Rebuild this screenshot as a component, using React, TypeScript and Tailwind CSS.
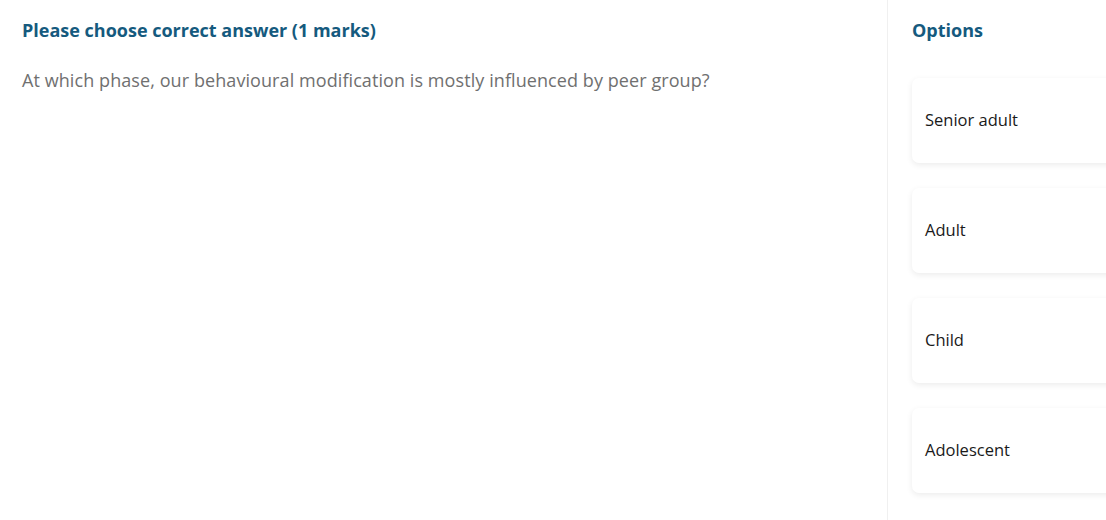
import React from "react";

export default function App() {
  const options = ["Senior adult", "Adult", "Child", "Adolescent"];
  return (
    <div
      className="flex w-[1106px] h-[520px] overflow-hidden bg-white"
      style={{ fontFamily: '"Open Sans", "Noto Sans", sans-serif' }}
    >
      <div className="w-[888px] shrink-0 border-r border-[#f0f0f0] px-[22px] pt-[17px]">
        <h2 className="text-[18px] leading-[26px] font-bold text-[#155a7e]">
          Please choose correct answer (1 marks)
        </h2>
        <p className="mt-[24px] text-[18px] leading-[26px] text-[#707070] tracking-[0.08px]">
          At which phase, our behavioural modification is mostly influenced by peer group?
        </p>
      </div>
      <div className="w-[320px] shrink-0 pl-[24px] pt-[17px]">
        <h3 className="text-[18px] leading-[26px] font-bold text-[#155a7e]">Options</h3>
        <div className="mt-[35px] flex flex-col gap-[25px]">
          {options.map((o) => (
            <div
              key={o}
              className="h-[85px] w-[260px] rounded-[7px] bg-white flex items-center pl-[13px] text-[16.5px] text-[#1a1a1a] shadow-[0_2px_6px_rgba(0,0,0,0.08)]"
            >
              {o}
            </div>
          ))}
        </div>
      </div>
    </div>
  );
}
